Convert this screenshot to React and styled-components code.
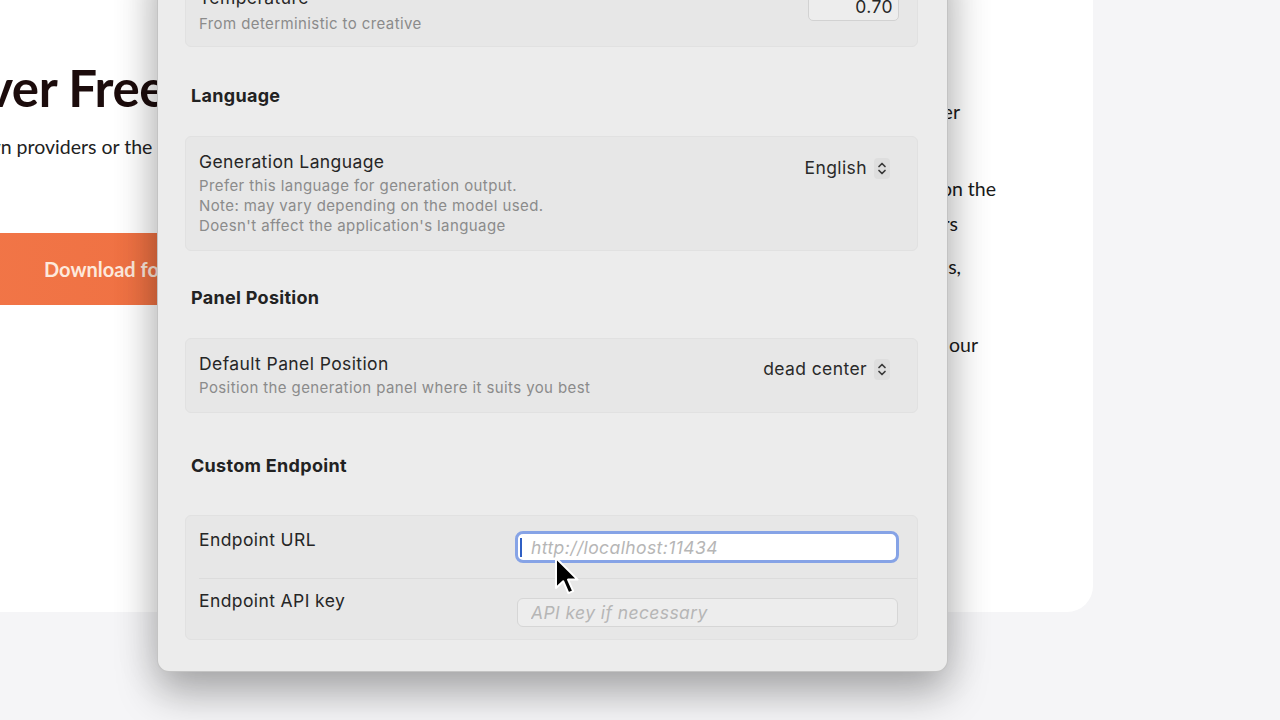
import React from 'react';
import styled, { createGlobalStyle } from 'styled-components';

const GlobalStyle = createGlobalStyle`
  html, body { margin: 0; padding: 0; }
  body { background: #f5f5f7; font-family: Inter, "Noto Sans", sans-serif; }
`;

const Page = styled.div`
  position: relative;
  width: 1280px;
  height: 720px;
  overflow: hidden;
  background: #f5f5f7;
`;

const Card = styled.div`
  width: 1093px;
  height: 612px;
  background: #ffffff;
  border-radius: 0 0 26px 0;
  display: flex;
  justify-content: space-between;
  font-family: Lato, "Open Sans", sans-serif;
  color: #1c0c0c;
`;

const Hero = styled.div`
  display: flex;
  flex-direction: column;
  padding-top: 61px;
  flex: none;
`;

const HeroTitle = styled.h1`
  margin: 0 0 0 ${p => p.shift}px;
  font-size: 51px;
  font-weight: 700;
  line-height: 54px;
  white-space: nowrap;
  letter-spacing: -0.4px;
`;

const HeroText = styled.p`
  margin: 19px 0 0 ${p => p.shift}px;
  font-size: 19.5px;
  line-height: 26px;
  color: #222;
  white-space: nowrap;
`;

const DownloadButton = styled.button`
  margin: 73px 0 0 ${p => p.shift}px;
  width: 420px;
  height: 72px;
  border: none;
  border-radius: 10px;
  background: linear-gradient(90deg, #f27648, #ec6d3e);
  color: #fde9dc;
  font-family: Lato, "Open Sans", sans-serif;
  font-size: 20px;
  font-weight: 700;
  text-align: left;
  padding-left: ${p => 44 - p.shift}px;
`;

const Features = styled.div`
  display: flex;
  flex-direction: column;
  padding-top: 99px;
`;

const FeatureLine = styled.div`
  margin-top: ${p => p.gap}px;
  margin-right: ${p => p.pad}px;
  text-align: right;
  font-size: 19.5px;
  line-height: 26px;
  color: #1a1a1a;
  white-space: nowrap;
`;

const Panel = styled.div`
  position: absolute;
  left: 157px;
  top: -50px;
  width: 791px;
  box-sizing: border-box;
  padding: 22px 29px 31px 27px;
  background: #ececec;
  border: 1px solid rgba(0, 0, 0, 0.17);
  border-top: none;
  border-radius: 0 0 12px 12px;
  box-shadow: 0 22px 40px rgba(0, 0, 0, 0.28), 0 0 46px rgba(0, 0, 0, 0.12);
  color: #262626;
`;

const SectionTitle = styled.h2`
  margin: ${p => p.above}px 0 ${p => p.below}px 6px;
  font-size: 18px;
  line-height: 22px;
  font-weight: 700;
  letter-spacing: 0.3px;
  color: #222;
`;

const Group = styled.div`
  background: #e7e7e7;
  border: 1px solid #e1e1e1;
  border-radius: 6px;
`;

const Row = styled.div`
  display: flex;
  justify-content: space-between;
  align-items: flex-start;
  padding: ${p => p.pad || '14px 27px 14px 13px'};
  & + & { border-top: 1px solid #dcdcdc; margin-left: 13px; padding-left: 0; }
`;

const Labels = styled.div`
  display: flex;
  flex-direction: column;
`;

const Label = styled.div`
  font-size: 17.5px;
  line-height: 22px;
  letter-spacing: 0.4px;
  margin-top: ${p => p.lift || 0}px;
`;

const Desc = styled.div`
  margin-top: ${p => p.gap || 3}px;
  font-size: 15px;
  line-height: 20px;
  letter-spacing: 0.4px;
  color: #8b8b8b;
`;

const NumberField = styled.div`
  margin-top: 6px;
  margin-right: -4px;
  width: 91px;
  height: 28px;
  box-sizing: border-box;
  border: 1px solid #d2d2d2;
  border-radius: 5px;
  background: #ededed;
  font-size: 17.5px;
  letter-spacing: 0.4px;
  line-height: 26px;
  text-align: right;
  padding-right: 5px;
`;

const Popup = styled.div`
  margin-top: ${p => p.top}px;
  display: flex;
  align-items: center;
  gap: 7px;
  font-size: 17.5px;
  letter-spacing: 0.4px;
  line-height: 22px;
  color: #2a2a2a;
`;

const ChevronBox = styled.span`
  display: flex;
  align-items: center;
  justify-content: center;
  width: 16px;
  height: 21px;
  border-radius: 4px;
  background: #dedede;
`;

const FocusField = styled.div`
  display: flex;
  align-items: center;
  width: 384px;
  height: 32px;
  margin-top: -1px;
  box-sizing: border-box;
  background: #ffffff;
  border: 3.5px solid #86a3e6;
  border-radius: 8px;
  padding-left: 2px;
`;

const Caret = styled.span`
  width: 2px;
  height: 19px;
  background: #2f5fc4;
  flex: none;
`;

const Input = styled.input`
  flex: 1;
  min-width: 0;
  height: 100%;
  box-sizing: border-box;
  border: ${p => (p.plain ? 'none' : '1px solid #d6d6d6')};
  border-radius: 6px;
  background: ${p => (p.plain ? 'transparent' : '#ededed')};
  padding: 0 0 0 ${p => (p.plain ? 9 : 13)}px;
  font-family: Inter, "Noto Sans", sans-serif;
  font-size: 17.5px;
  letter-spacing: 0.4px;
  font-style: italic;
  outline: none;
  &::placeholder { color: #b6b6b6; }
`;

const PlainField = styled.div`
  display: flex;
  width: 381px;
  height: 29px;
  margin-top: 4px;
  margin-right: 1px;
`;

const Cursor = styled.svg`
  position: absolute;
  left: 554px;
  top: 556px;
`;

const Chevrons = () => (
  <svg width="10" height="15" viewBox="0 0 10 15" fill="none" stroke="#3a3a3a" strokeWidth="1.7" strokeLinecap="round" strokeLinejoin="round">
    <path d="M2 5.5 L5 2.5 L8 5.5" />
    <path d="M2 9.5 L5 12.5 L8 9.5" />
  </svg>
);

export default function App() {
  return (
    <>
      <GlobalStyle />
      <Page>
        <Card>
          <Hero>
            <HeroTitle shift={-113}>Forever Free</HeroTitle>
            <HeroText shift={-106}>Use your own providers or the free tiers</HeroText>
            <DownloadButton shift={-60}>Download for macOS</DownloadButton>
          </Hero>
          <Features>
            <FeatureLine gap={0} pad={133}>works with every major provider</FeatureLine>
            <FeatureLine gap={51} pad={97}>pick any model right on the</FeatureLine>
            <FeatureLine gap={9} pad={135}>menu bar, yours</FeatureLine>
            <FeatureLine gap={17} pad={132}>no accounts, no subscriptions,</FeatureLine>
            <FeatureLine gap={52} pad={115}>made by a team of our</FeatureLine>
          </Features>
        </Card>

        <Panel>
          <Group>
            <Row pad="14px 22px 12px 13px">
              <Labels>
                <Label>Temperature</Label>
                <Desc gap={5}>From deterministic to creative</Desc>
              </Labels>
              <NumberField>0.70</NumberField>
            </Row>
          </Group>

          <SectionTitle above={38} below={29}>Language</SectionTitle>
          <Group>
            <Row>
              <Labels>
                <Label>Generation Language</Label>
                <Desc>
                  Prefer this language for generation output.<br />
                  Note: may vary depending on the model used.<br />
                  Doesn't affect the application's language
                </Desc>
              </Labels>
              <Popup top={6}>English<ChevronBox><Chevrons /></ChevronBox></Popup>
            </Row>
          </Group>

          <SectionTitle above={36} below={29}>Panel Position</SectionTitle>
          <Group>
            <Row>
              <Labels>
                <Label>Default Panel Position</Label>
                <Desc>Position the generation panel where it suits you best</Desc>
              </Labels>
              <Popup top={5}>dead center<ChevronBox><Chevrons /></ChevronBox></Popup>
            </Row>
          </Group>

          <SectionTitle above={42} below={38}>Custom Endpoint</SectionTitle>
          <Group>
            <Row pad="16px 18px 15px 13px">
              <Label lift={-3}>Endpoint URL</Label>
              <FocusField>
                <Caret />
                <Input plain placeholder="http://localhost:11434" />
              </FocusField>
            </Row>
            <Row pad="15px 18px 12px 13px">
              <Label lift={-4}>Endpoint API key</Label>
              <PlainField>
                <Input placeholder="API key if necessary" />
              </PlainField>
            </Row>
          </Group>
        </Panel>

        <Cursor width="26" height="40" viewBox="0 0 13 20">
          <path d="M1 1 L1 16 L4.6 12.6 L7.2 18.6 L9.6 17.6 L7 11.8 L11.8 11.8 Z" fill="#000" stroke="#fff" strokeWidth="1" strokeLinejoin="round" />
        </Cursor>
      </Page>
    </>
  );
}
